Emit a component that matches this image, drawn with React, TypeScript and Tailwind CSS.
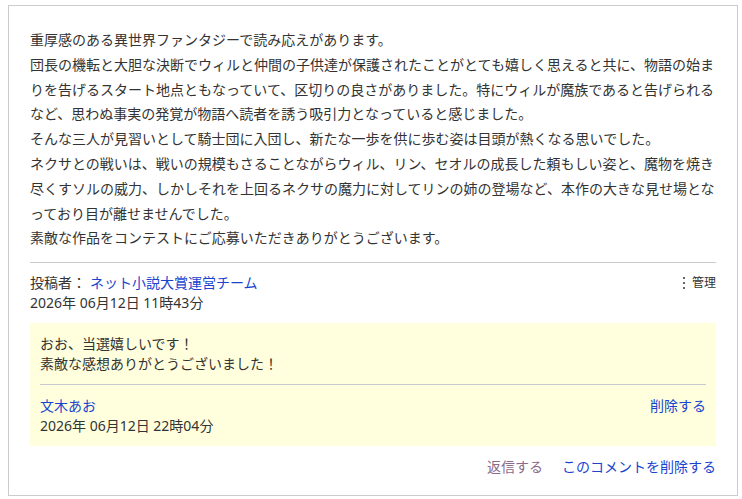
export default function App() {
  const font = { fontFamily: '"Noto Sans", "Noto Sans CJK JP", sans-serif' };
  return (
    <div className="w-[742px] h-[499px] bg-white pt-[5px] pl-[8px]" style={font}>
      <div className="w-[730px] h-[491px] border border-[#cccccc] px-[21px] pt-[22px]">
        <div className="w-[690px] text-[14px] leading-[24.8px] text-[#333333]">
          <p>重厚感のある異世界ファンタジーで読み応えがあります。</p>
          <p>団長の機転と大胆な決断でウィルと仲間の子供達が保護されたことがとても嬉しく思えると共に、物語の始まりを告げるスタート地点ともなっていて、区切りの良さがありました。特にウィルが魔族であると告げられるなど、思わぬ事実の発覚が物語へ読者を誘う吸引力となっていると感じました。</p>
          <p>そんな三人が見習いとして騎士団に入団し、新たな一歩を供に歩む姿は目頭が熱くなる思いでした。</p>
          <p>ネクサとの戦いは、戦いの規模もさることながらウィル、リン、セオルの成長した頼もしい姿と、魔物を焼き尽くすソルの威力、しかしそれを上回るネクサの魔力に対してリンの姉の登場など、本作の大きな見せ場となっており目が離せませんでした。</p>
          <p>素敵な作品をコンテストにご応募いただきありがとうございます。</p>
        </div>
        <div className="w-[686px] mt-[11px] border-t border-[#cccccc] pt-[10px]">
          <div className="flex justify-between items-start">
            <div className="text-[14px] leading-[20px] text-[#333333]">
              <div>
                投稿者：<span className="ml-[4px] text-[#1a44d0]">ネット小説大賞運営チーム</span>
              </div>
              <div>2026年 06月12日 11時43分</div>
            </div>
            <div className="flex items-center gap-[7px] text-[12px] leading-[20px] text-[#333333]">
              <svg width="2" height="12" viewBox="0 0 2 12">
                <rect x="0" y="0" width="2" height="2" fill="#666" />
                <rect x="0" y="5" width="2" height="2" fill="#666" />
                <rect x="0" y="10" width="2" height="2" fill="#666" />
              </svg>
              <span>管理</span>
            </div>
          </div>
          <div className="mt-[10px] bg-[#ffffdd] px-[10px] pt-[11px] pb-[10px] text-[14px] leading-[20px] text-[#333333]">
            <div>おお、当選嬉しいです！</div>
            <div>素敵な感想ありがとうございました！</div>
            <div className="mt-[10px] border-t border-[#c8c8d0] pt-[11px] flex justify-between items-start">
              <div>
                <div className="text-[#1a44d0]">文木あお</div>
                <div>2026年 06月12日 22時04分</div>
              </div>
              <div className="text-[#1a44d0]">削除する</div>
            </div>
          </div>
          <div className="mt-[11px] flex justify-end gap-[19px] text-[14px] leading-[20px]">
            <span className="text-[#8b6b8b]">返信する</span>
            <span className="text-[#1a44d0]">このコメントを削除する</span>
          </div>
        </div>
      </div>
    </div>
  );
}
